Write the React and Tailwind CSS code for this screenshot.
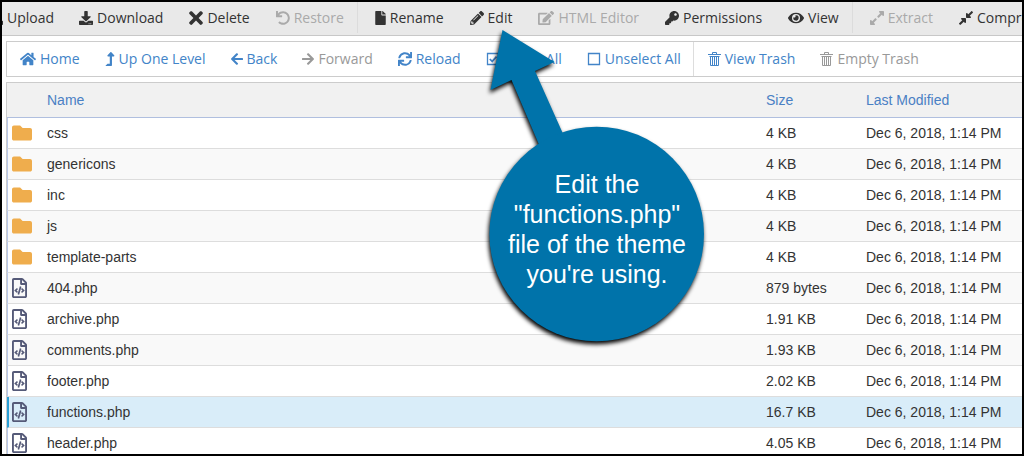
import {
  FaArrowLeft,
  FaArrowRight,
  FaDownload,
  FaEdit,
  FaExpandAlt,
  FaCompressAlt,
  FaEye,
  FaFile,
  FaFolder,
  FaHome,
  FaKey,
  FaLevelUpAlt,
  FaPencilAlt,
  FaRegFileCode,
  FaSync,
  FaTimes,
  FaUndo,
  FaUpload,
} from "react-icons/fa";

function TrashIcon({ className }) {
  return (
    <svg viewBox="0 0 13 16" className={className} fill="none" stroke="currentColor" aria-hidden="true">
      <path d="M4.500 3V1.500h4V3M0 3.500h13M1.500 5.500h10M2.500 5.500v9h8v-9M4.500 6v8M6.500 6v8M8.500 6v8" />
    </svg>
  );
}

function BoxIcon({ className }) {
  return (
    <svg viewBox="0 0 14 14" className={className} fill="none" stroke="currentColor" strokeWidth="1.3" aria-hidden="true">
      <path d="M1.500 1.500h11v11h-11z" />
    </svg>
  );
}

function CheckedBoxIcon({ className }) {
  return (
    <svg viewBox="0 0 14 14" className={className} fill="none" stroke="currentColor" strokeWidth="1.3" aria-hidden="true">
      <path d="M1.500 1.500h11v11h-11z" />
      <path d="M3.800 7l2.400 2.400 4.300-4.800" strokeWidth="1.700" />
    </svg>
  );
}

const fileActions = [
  [
    { label: "Download", icon: FaDownload, size: "h-3.5 w-3.5" },
    { label: "Delete", icon: FaTimes, size: "h-5 w-3.5" },
    { label: "Restore", icon: FaUndo, size: "h-3.5 w-3.5", disabled: true },
  ],
  [
    { label: "Rename", icon: FaFile, size: "h-3.5 w-[11px]" },
    { label: "Edit", icon: FaPencilAlt, size: "h-3.5 w-3.5" },
    { label: "HTML Editor", icon: FaEdit, size: "h-4 w-4", disabled: true },
    { label: "Permissions", icon: FaKey, size: "h-3.5 w-3.5" },
    { label: "View", icon: FaEye, size: "h-4 w-4" },
  ],
  [
    { label: "Extract", icon: FaExpandAlt, size: "h-4 w-3.5", disabled: true },
    { label: "Compress", icon: FaCompressAlt, size: "h-4 w-3.5" },
  ],
];

const navActions = [
  [
    { label: "Home", icon: FaHome, size: "h-4 w-4" },
    { label: "Up One Level", icon: FaLevelUpAlt, size: "h-3.5 w-2.5" },
    { label: "Back", icon: FaArrowLeft, size: "h-3.5 w-3" },
    { label: "Forward", icon: FaArrowRight, size: "h-3.5 w-3", disabled: true },
    { label: "Reload", icon: FaSync, size: "h-3.5 w-3.5" },
    { label: "Select All", icon: CheckedBoxIcon, size: "h-3.5 w-3.5" },
    { label: "Unselect All", icon: BoxIcon, size: "h-3.5 w-3.5" },
  ],
  [
    { label: "View Trash", icon: TrashIcon, size: "h-4 w-[13px]" },
    { label: "Empty Trash", icon: TrashIcon, size: "h-4 w-[13px]", disabled: true },
  ],
];

const files = [
  { name: "css", size: "4 KB", folder: true },
  { name: "genericons", size: "4 KB", folder: true },
  { name: "inc", size: "4 KB", folder: true },
  { name: "js", size: "4 KB", folder: true },
  { name: "template-parts", size: "4 KB", folder: true },
  { name: "404.php", size: "879 bytes" },
  { name: "archive.php", size: "1.91 KB" },
  { name: "comments.php", size: "1.93 KB" },
  { name: "footer.php", size: "2.02 KB" },
  { name: "functions.php", size: "16.7 KB", selected: true },
  { name: "header.php", size: "4.05 KB" },
];

function Action({ item, className }) {
  const Icon = item.icon;
  return (
    <button
      type="button"
      disabled={item.disabled}
      className={`flex shrink-0 items-center gap-1 whitespace-nowrap ${className}`}
    >
      <Icon className={`shrink-0 ${item.size}`} />
      {item.label}
    </button>
  );
}

function Callout() {
  return (
    <div className="pointer-events-none absolute top-[22px] left-[480px] h-[336px] w-[234px]">
      <svg viewBox="0 0 234 336" className="h-full w-full drop-shadow-[-1px_3px_2px_#000000]" aria-hidden="true">
        <path fill="#0073aa" d="M22.500 8L74.500 40L55 49L84 114L60 125L31.500 58L10.500 68Z" />
        <circle cx="116.700" cy="212" r="107.300" fill="#0073aa" />
      </svg>
      <p className="absolute inset-x-0 top-[147px] text-center text-[25px] leading-[30px] text-white">
        Edit the
        <br />
        "functions.php"
        <br />
        file of the theme
        <br />
        you're using.
      </p>
    </div>
  );
}

export default function App() {
  return (
    <main className="relative h-screen overflow-hidden bg-white font-['Liberation_Sans',Arial,sans-serif] text-sm text-[#333333]">
      <div className="flex h-full flex-col overflow-hidden border-2 border-black">
        <div
          role="toolbar"
          aria-label="File actions"
          className="flex h-[34px] shrink-0 overflow-hidden border-b border-[#c8c8c8] bg-[#e9e9e9] pb-0.5 font-['Open_Sans',sans-serif]"
        >
          <button type="button" className="-ml-[13px] flex shrink-0 items-center gap-1 pr-3">
            <FaUpload className="h-3.5 w-3.5 shrink-0" />
            Upload
          </button>
          {fileActions.map((group, i) => (
            <div key={i} className={`flex shrink-0 ${i ? "border-l border-[#dcdcdc] pl-1" : ""}`}>
              {group.map((item) => (
                <Action
                  key={item.label}
                  item={item}
                  className={`px-[13px] ${item.disabled ? "text-[#aaaaaa]" : "text-[#333333]"}`}
                />
              ))}
            </div>
          ))}
        </div>

        <div
          role="toolbar"
          aria-label="Navigation"
          className="mt-[5px] ml-1 flex h-9 shrink-0 overflow-hidden border-y border-l border-[#cccccc] font-['Open_Sans',sans-serif]"
        >
          {navActions.map((group, i) => (
            <div key={i} className={`flex shrink-0 ${i ? "border-l border-[#dddddd] pl-px" : ""}`}>
              {group.map((item) => (
                <Action
                  key={item.label}
                  item={item}
                  className={`pr-3 pl-[13px] ${item.disabled ? "text-[#999999]" : "text-[#4284c8]"}`}
                />
              ))}
            </div>
          ))}
        </div>

        <div className="mt-[5px] ml-1 min-h-0 overflow-hidden border-t border-l border-[#cccccc]">
          <table className="w-full table-fixed border-separate border-spacing-0 text-left">
            <colgroup>
              <col className="w-10" />
              <col />
              <col className="w-[100px]" />
              <col className="w-[156px]" />
            </colgroup>
            <thead>
              <tr className="h-[35px] bg-[#f1f1f1] text-[#4a80c4] [&>th]:border-b [&>th]:border-[#b0bfdf] [&>th]:p-0 [&>th]:font-normal">
                <th aria-label="Type" />
                <th>Name</th>
                <th>Size</th>
                <th>Last Modified</th>
              </tr>
            </thead>
            <tbody>
              {files.map((file, i) => (
                <tr
                  key={file.name}
                  aria-selected={!!file.selected}
                  className={`h-[31px] [&>td]:border-b [&>td]:border-b-[#dddddd] [&>td]:p-0 ${
                    file.selected ? "bg-[#d9edf9]" : i % 2 ? "bg-[#f9f9f9]" : "bg-white"
                  }`}
                >
                  <td className={file.selected ? "border-l-2 border-l-[#2a9fd6]" : "border-l border-l-[#b9c8ea]"}>
                    {file.folder ? (
                      <FaFolder className="ml-1 h-5 w-5 text-[#efad4d]" />
                    ) : (
                      <FaRegFileCode className={`h-5 w-[15px] text-[#555a78] ${file.selected ? "ml-[3px]" : "ml-1"}`} />
                    )}
                  </td>
                  <td>{file.name}</td>
                  <td>{file.size}</td>
                  <td className="whitespace-nowrap">Dec 6, 2018, 1:14 PM</td>
                </tr>
              ))}
            </tbody>
          </table>
        </div>
      </div>
      <Callout />
    </main>
  );
}
